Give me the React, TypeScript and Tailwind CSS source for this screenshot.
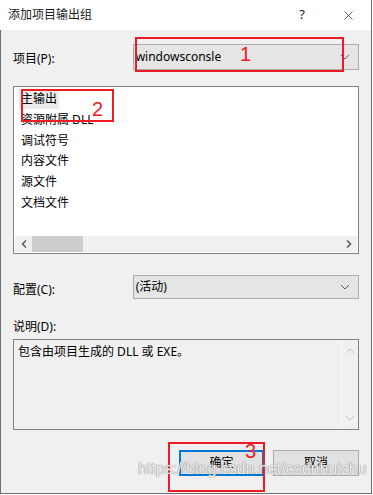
import { X } from 'lucide-react';

const items = ['主输出', '资源附属 DLL', '调试符号', '内容文件', '源文件', '文档文件'];

function Chevron({ up = false, color = '#606060' }: { up?: boolean; color?: string }) {
    return (
        <svg width="10" height="6" viewBox="0 0 10 6" className={up ? 'rotate-180' : ''}>
            <path d="M1 1 L5 5 L9 1" fill="none" stroke={color} strokeWidth="1" />
        </svg>
    );
}

function Combo({ value, tall }: { value: string; tall?: boolean }) {
    return (
        <div
            className={`flex items-center w-[227px] ${tall ? 'h-[26px]' : 'h-[24px]'} bg-[#e5e5e5] border border-[#adadad] pl-[2px] pr-[8px]`}
        >
            <span className="flex-1 text-[12px] text-black leading-none">{value}</span>
            <Chevron />
        </div>
    );
}

export default function App() {
    return (
        <div className="relative w-[373px] h-[495px] bg-white overflow-hidden font-['Noto_Sans','Noto_Sans_CJK_SC',sans-serif] text-[12px] text-black">
            <div className="flex flex-col w-[372px] h-[494px]">
                {/* title bar */}
                <div className="flex items-center h-[30px] bg-white border-r border-[#6e6e6e] pl-[8px]">
                    <span className="flex-1 text-[12px] text-[#1a1a1a]">添加项目输出组</span>
                    <span className="w-[46px] text-center text-[13px] text-[#222]">?</span>
                    <span className="w-[46px] flex justify-center">
                        <X size={15} strokeWidth={1.1} color="#222" />
                    </span>
                </div>

                {/* body */}
                <div className="flex-1 flex flex-col bg-[#f0f0f0] border-l border-r border-b border-[#6e6e6e] px-[12px]">
                    <div className="flex mt-[14px]">
                        <span className="w-[120px] pt-[6px]">项目(P):</span>
                        <Combo value="windowsconsle" tall />
                    </div>

                    <div className="mt-[16px] h-[168px] bg-white border border-[#828282] flex flex-col">
                        <div className="flex-1 flex flex-col pt-[2px] pl-[5px]">
                            {items.map((it, i) => (
                                <div key={it} className="h-[20.7px] flex items-center">
                                    <span className={`px-[2px] h-[20px] flex items-center ${i === 0 ? 'bg-[#ebebeb]' : ''}`}>
                                        {it}
                                    </span>
                                </div>
                            ))}
                        </div>
                        <div className="mx-[1px] mb-[1px] h-[16px] bg-[#f0f0f0] flex items-center">
                            <span className="w-[17px] flex justify-center">
                                <svg width="6" height="8" viewBox="0 0 6 8">
                                    <path d="M5 0.5 L1.5 4 L5 7.5" fill="none" stroke="#606060" strokeWidth="1.6" />
                                </svg>
                            </span>
                            <span className="w-[51px] h-[16px] bg-[#cdcdcd]" />
                            <span className="flex-1" />
                            <span className="w-[17px] flex justify-center">
                                <svg width="6" height="8" viewBox="0 0 6 8">
                                    <path d="M1 0.5 L4.5 4 L1 7.5" fill="none" stroke="#606060" strokeWidth="1.6" />
                                </svg>
                            </span>
                        </div>
                    </div>

                    <div className="flex mt-[21px]">
                        <span className="w-[120px] pt-[6px]">配置(C):</span>
                        <Combo value="(活动)" />
                    </div>

                    <div className="mt-[19px] h-[17px] flex items-center">说明(D):</div>

                    <div className="mt-[4px] h-[91px] border border-[#828282] flex">
                        <div className="flex-1 pl-[4px] pt-[3px]">包含由项目生成的 DLL 或 EXE。</div>
                        <div className="w-[17px] border-l border-[#fafafa] flex flex-col items-center justify-between py-[8px]">
                            <Chevron up color="#c2c2c2" />
                            <Chevron color="#c2c2c2" />
                        </div>
                    </div>

                    <div className="flex justify-end gap-[9px] mt-[20px]">
                        <button className="w-[85px] h-[26px] bg-[#e1e1e1] border-2 border-[#0078d7] text-[12px]">确定</button>
                        <button className="w-[86px] h-[26px] bg-[#e1e1e1] border border-[#adadad] text-[12px]">取消</button>
                    </div>
                </div>
            </div>

            {/* annotations */}
            <div className="absolute left-[135px] top-[37px] w-[209px] h-[35px] border-2 border-[#ed1c24]" />
            <span className="absolute left-[240px] top-[44px] text-[20px] leading-none text-[#ed1c24] font-['Liberation_Sans',sans-serif]">1</span>
            <div className="absolute left-[21px] top-[89px] w-[93px] h-[33px] border-2 border-[#ed1c24]" />
            <span className="absolute left-[92px] top-[99px] text-[20px] leading-none text-[#ed1c24] font-['Liberation_Sans',sans-serif]">2</span>
            <div className="absolute left-[168px] top-[442px] w-[97px] h-[50px] border-2 border-[#ed1c24]" />
            <span className="absolute left-[245px] top-[441px] text-[20px] leading-none text-[#ed1c24] font-['Liberation_Sans',sans-serif]">3</span>

            {/* watermark */}
            <span className="absolute left-[138px] top-[461px] text-[16px] leading-none text-white/90 font-['Liberation_Sans',sans-serif] [text-shadow:0_0_1px_#707070,0_0_1px_#909090]">
                https://blog.csdn.net/csdnhuizhu
            </span>
        </div>
    );
}
